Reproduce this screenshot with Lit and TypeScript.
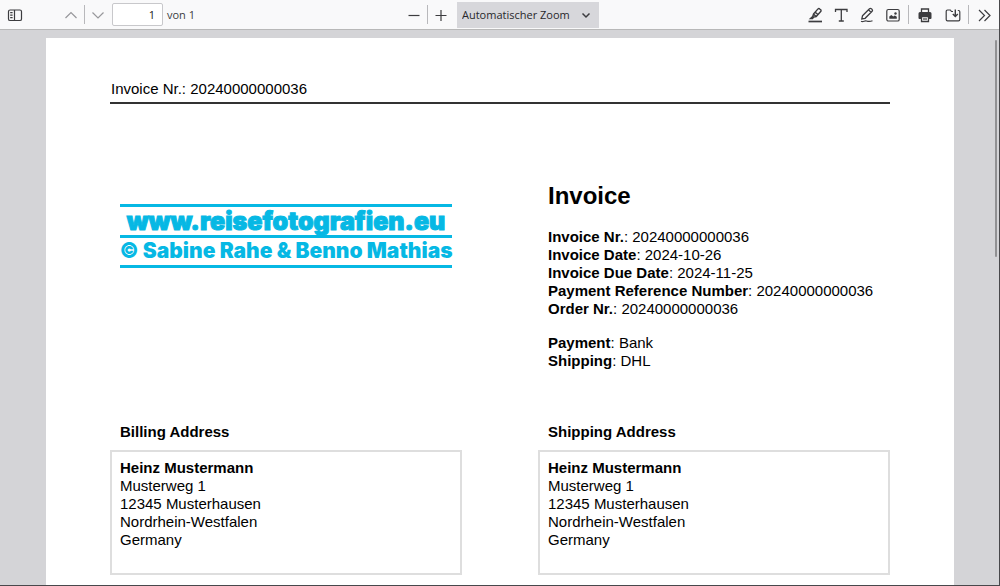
import { LitElement, html, css, svg } from "lit";
import { customElement, property } from "lit/decorators.js";

const icons = {
  sidebar: svg`<rect x="1.500" y="3" width="13" height="10.500" rx="1.600"/><path d="M7.500 3v10.500M3.200 5.700h2.400M3.200 8.200h2.400M3.200 10.700h2.400"/>`,
  up: svg`<path d="M2.500 11 8 5.500 13.500 11"/>`,
  down: svg`<path d="M2.500 5.500 8 11l5.500-5.500"/>`,
  minus: svg`<path d="M2.500 8.500h11"/>`,
  plus: svg`<path d="M2.500 8.500h11M8 3v11"/>`,
  highlight: svg`<path d="M1.500 14.500h13.500" stroke-width="1.700"/><path d="M6.500 7 11 1.900a1.200 1.200 0 0 1 1.700 0l1 .9a1.200 1.200 0 0 1 0 1.700L9.200 9.500l-2.500.5L5.500 11.500H3.500L5.700 9.500zM6.500 7l2.700 2.500M8.300 5.200l2.600 2.300" stroke-width="1.400"/>`,
  text: svg`<path d="M2.500 5V2.500h11.500V5M8.300 2.500V14M5.800 14h5" stroke-width="1.300"/>`,
  draw: svg`<path d="m3.500 8.800 7-7.100a1.300 1.300 0 0 1 1.900 0l.7.7a1.300 1.300 0 0 1 0 1.900l-7 7-3.300.7zM9.500 2.800l2.600 2.600" stroke-width="1.300"/><path d="M2 14.300c2.500 1 3.500-1 5.500-.3s3.500.8 6-.2"/>`,
  image: svg`<rect x="1.800" y="2.500" width="12.400" height="11.500" rx="1.600"/><path d="M4.300 11.700V9.500l2-1.500 2 1.500 1.500-1 2 1.200v2z" fill="currentColor" stroke="none"/><circle cx="10.500" cy="6.500" r="1.200" fill="currentColor" stroke="none"/>`,
  print: svg`<path d="M4.500 5V2h7v3" stroke-width="1.300"/><path d="M3 5h10a1.500 1.500 0 0 1 1.500 1.500V11a1 1 0 0 1-1 1H12V9.500H4V12H2.500a1 1 0 0 1-1-1V6.500A1.500 1.500 0 0 1 3 5z" fill="currentColor" stroke="none"/><path d="M4.500 9.500h7v5h-7z" stroke-width="1.300"/><path d="M6 12h4"/>`,
  save: svg`<path d="M8 4.500H6.500L5.300 3H2.500A1.300 1.300 0 0 0 1.200 4.300v8.200a1.300 1.300 0 0 0 1.300 1.300h11a1.300 1.300 0 0 0 1.300-1.300V4.800a1.300 1.300 0 0 0-1.300-1.300h-.7"/><path d="M10.300 2.500v7M7.800 7l2.500 2.500L12.800 7" stroke-width="1.400"/>`,
  more: svg`<path d="m2 3 5.500 5.500L2 14M7.500 3l5.500 5.500L7.500 14"/>`,
  chevron: svg`<path d="M4.500 6.500 8 10l3.500-3.500" stroke-width="1.500"/>`,
};

type IconName = keyof typeof icons;

const icon = (name: IconName) => html`
  <svg class="icon" viewBox="0 0 16 16" width="16" height="16" aria-hidden="true">${icons[name]}</svg>
`;

@customElement("viewer-toolbar")
export class ViewerToolbar extends LitElement {
  static styles = css`
    :host {
      display: grid;
      grid-template-columns: 1fr auto 1fr;
      align-items: center;
      height: 29px;
      flex: none;
      background: #f9f9fa;
      border-bottom: 1px solid #b8b8b8;
      color: #3c3c3f;
      font: 11px/16px "Open Sans", "Noto Sans", sans-serif;
    }
    .group {
      display: flex;
      align-items: center;
    }
    .left {
      padding-left: 3px;
    }
    .middle {
      padding-left: 2px;
    }
    .right {
      justify-content: flex-end;
      padding-right: 2px;
    }
    .tools {
      display: flex;
      gap: 2px;
    }
    .files {
      display: flex;
      gap: 4px;
    }
    .right .separator {
      margin: 0 4px 0 3px;
    }
    .button {
      display: flex;
      align-items: center;
      justify-content: center;
      width: 24px;
      height: 24px;
      padding: 0;
      border: 0;
      background: none;
      color: inherit;
    }
    .button:disabled {
      color: #98989b;
    }
    .icon {
      fill: none;
      stroke: currentColor;
      stroke-width: 1.2;
    }
    .spacer {
      width: 32px;
    }
    .separator {
      width: 1px;
      height: 19px;
      margin: 0 1px;
      background: #b8b8bb;
    }
    .page {
      box-sizing: border-box;
      width: 51px;
      height: 23px;
      margin: 0 4px 0 2px;
      padding: 0 7px;
      border: 1px solid #c8c8cb;
      border-radius: 2px;
      background: #fff;
      color: #18181a;
      font: inherit;
      text-align: right;
    }
    .zoom {
      display: grid;
      align-items: center;
      width: 142px;
      height: 26px;
      margin-left: 4px;
      background: #d7d7db;
    }
    .select {
      grid-area: 1 / 1;
      height: 26px;
      padding: 0 24px 0 5px;
      border: 0;
      appearance: none;
      background: none;
      color: #28282b;
      font: inherit;
    }
    .arrow {
      display: flex;
      grid-area: 1 / 1;
      justify-self: end;
      margin-right: 5px;
      pointer-events: none;
    }
  `;

  private button(name: IconName, label: string, disabled = false) {
    return html`<button class="button" type="button" aria-label=${label} ?disabled=${disabled}>
      ${icon(name)}
    </button>`;
  }

  render() {
    return html`
      <div class="group left">
        ${this.button("sidebar", "Seitenleiste")}
        <span class="spacer"></span>
        ${this.button("up", "Vorherige Seite", true)}
        <span class="separator"></span>
        ${this.button("down", "Nächste Seite", true)}
        <input class="page" id="page" type="text" value="1" aria-label="Seite" />
        <label for="page">von 1</label>
      </div>
      <div class="group middle">
        ${this.button("minus", "Verkleinern")}
        <span class="separator"></span>
        ${this.button("plus", "Vergrößern")}
        <div class="zoom">
          <select class="select" aria-label="Zoom">
            <option>Automatischer Zoom</option>
          </select>
          <span class="arrow">${icon("chevron")}</span>
        </div>
      </div>
      <div class="group right">
        <div class="tools">
          ${this.button("highlight", "Hervorheben")}
          ${this.button("text", "Text")}
          ${this.button("draw", "Zeichnen")}
          ${this.button("image", "Bild")}
        </div>
        <span class="separator"></span>
        <div class="files">
          ${this.button("print", "Drucken")}
          ${this.button("save", "Speichern")}
        </div>
        <span class="separator"></span>
        ${this.button("more", "Werkzeuge")}
      </div>
    `;
  }
}

@customElement("address-card")
export class AddressCard extends LitElement {
  @property() heading = "";
  @property({ type: Array }) lines: string[] = [];

  static styles = css`
    :host {
      display: block;
    }
    .heading {
      margin: 0 0 9px;
      padding: 0 10px;
      font-size: 15px;
      line-height: 18px;
    }
    .box {
      box-sizing: border-box;
      min-height: 125px;
      padding: 7px 8px;
      border: 2px solid #dedede;
      font-style: normal;
    }
    .line {
      display: block;
    }
    .line:first-child {
      font-weight: bold;
    }
  `;

  render() {
    return html`
      <h2 class="heading">${this.heading}</h2>
      <address class="box">
        ${this.lines.map((line) => html`<span class="line">${line}</span>`)}
      </address>
    `;
  }
}

@customElement("app-root")
export class AppRoot extends LitElement {
  private number = "20240000000036";
  private address = [
    "Heinz Mustermann",
    "Musterweg 1",
    "12345 Musterhausen",
    "Nordrhein-Westfalen",
    "Germany",
  ];

  static styles = css`
    :host {
      display: flex;
      flex-direction: column;
      box-sizing: border-box;
      height: 100vh;
      overflow: hidden;
      position: relative;
      border-right: 1px solid #48484b;
      border-bottom: 1px solid #48484b;
      background: #d4d4d7;
    }
    .viewer {
      display: flex;
      flex: 1;
      min-height: 0;
      padding: 8px 45px 0 46px;
    }
    .sheet {
      flex: 1;
      padding: 42px 64px 0;
      background: #fff;
      color: #000;
      font: 15px/18px "Liberation Sans", Arial, sans-serif;
    }
    .running {
      padding: 0 1px 4px;
      border-bottom: 2px solid #333;
    }
    .columns {
      display: grid;
      grid-template-columns: minmax(0, 1fr) minmax(0, 1fr);
      column-gap: 76px;
    }
    .intro {
      padding: 77px 0 53px;
    }
    .logo {
      align-self: start;
      margin: 23px 10px 0;
      color: #06b8e4;
      font-family: Inter, sans-serif;
      font-weight: 900;
      text-align: center;
      white-space: nowrap;
    }
    .site,
    .authors {
      display: flex;
      justify-content: center;
      border-top: 3px solid;
    }
    .site {
      height: 28px;
      font-size: 25px;
      line-height: 28px;
      -webkit-text-stroke: 1px;
    }
    .authors {
      height: 27px;
      border-bottom: 3px solid;
      font-size: 21px;
      line-height: 26px;
    }
    .details {
      padding-left: 10px;
    }
    .title {
      margin: 0 0 17px;
      font-size: 24px;
      line-height: 30px;
    }
    .list {
      margin: 0 0 16px;
    }
    .list:last-child {
      margin: 0;
    }
    .term,
    .value {
      display: inline;
      margin: 0;
    }
    .term {
      font-weight: bold;
    }
    .scrollbar {
      position: absolute;
      top: 40px;
      right: 2px;
      width: 2px;
      height: 217px;
      border-radius: 1px;
      background: #919193;
    }
  `;

  private entries(rows: [string, string][]) {
    return html`<dl class="list">
      ${rows.map(
        ([term, value]) => html`<div><dt class="term">${term}</dt><dd class="value">: ${value}</dd></div>`,
      )}
    </dl>`;
  }

  render() {
    return html`
      <viewer-toolbar></viewer-toolbar>
      <main class="viewer">
        <article class="sheet">
          <header class="running">Invoice Nr.: ${this.number}</header>
          <section class="columns intro">
            <div class="logo">
              <div class="site">www.reisefotografien.eu</div>
              <div class="authors">© Sabine Rahe &amp; Benno Mathias</div>
            </div>
            <div class="details">
              <h1 class="title">Invoice</h1>
              ${this.entries([
                ["Invoice Nr.", this.number],
                ["Invoice Date", "2024-10-26"],
                ["Invoice Due Date", "2024-11-25"],
                ["Payment Reference Number", this.number],
                ["Order Nr.", this.number],
              ])}
              ${this.entries([
                ["Payment", "Bank"],
                ["Shipping", "DHL"],
              ])}
            </div>
          </section>
          <section class="columns">
            <address-card heading="Billing Address" .lines=${this.address}></address-card>
            <address-card heading="Shipping Address" .lines=${this.address}></address-card>
          </section>
        </article>
      </main>
      <div class="scrollbar"></div>
    `;
  }
}
